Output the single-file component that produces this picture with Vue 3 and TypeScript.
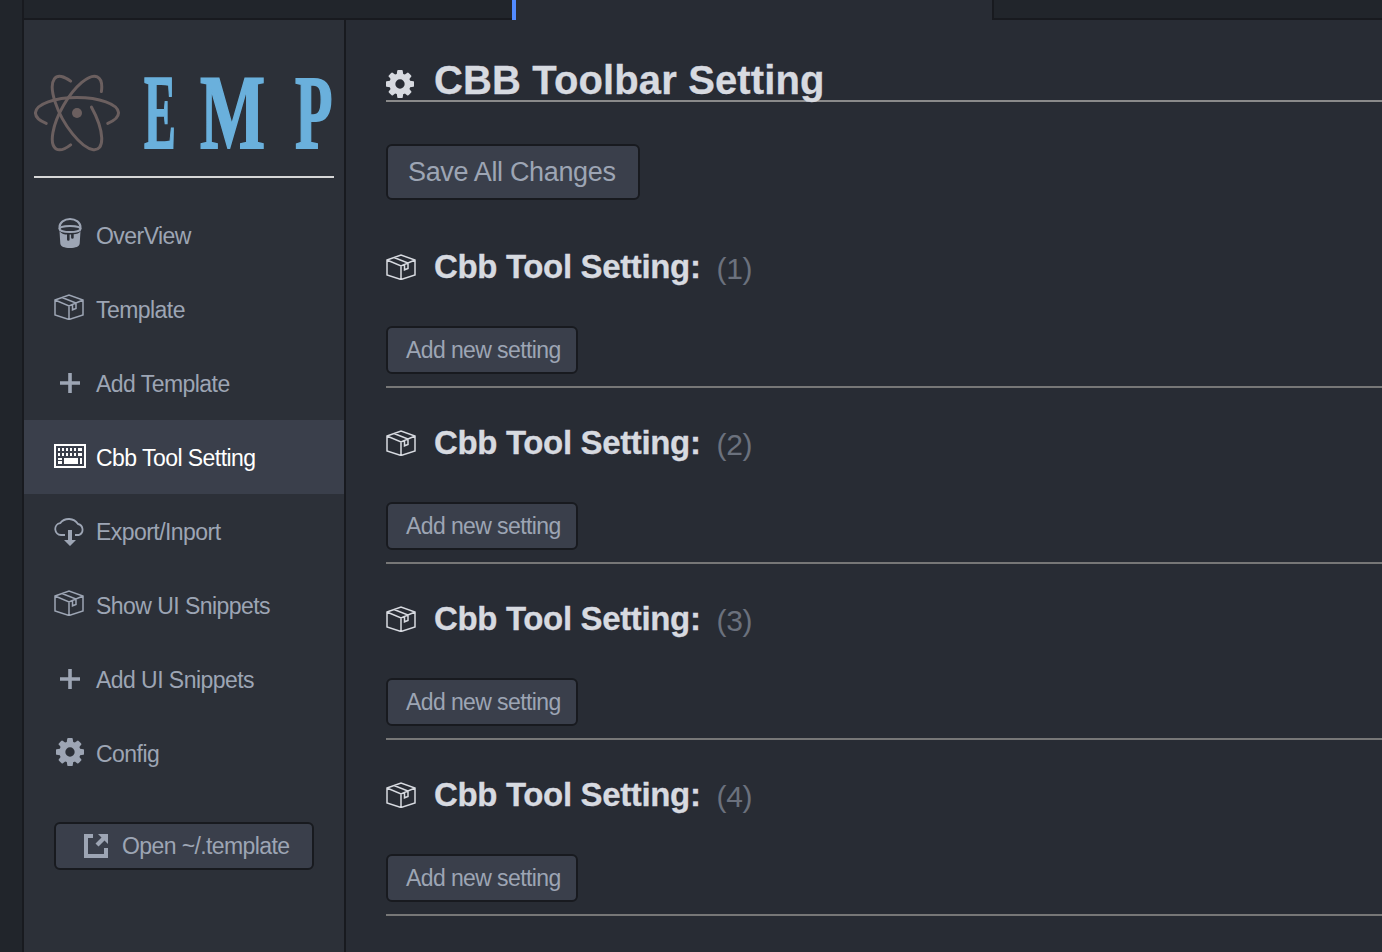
<script setup lang="ts">
interface NavItem {
  label: string
  icon: 'bucket' | 'box' | 'plus' | 'keyboard' | 'cloud' | 'gear'
  active?: boolean
}

const navItems: NavItem[] = [
  { label: 'OverView', icon: 'bucket' },
  { label: 'Template', icon: 'box' },
  { label: 'Add Template', icon: 'plus' },
  { label: 'Cbb Tool Setting', icon: 'keyboard', active: true },
  { label: 'Export/Inport', icon: 'cloud' },
  { label: 'Show UI Snippets', icon: 'box' },
  { label: 'Add UI Snippets', icon: 'plus' },
  { label: 'Config', icon: 'gear' }
]

const sections = [1, 2, 3, 4]

const gearPath =
  'M1024 768q0-106-75-181t-181-75-181 75-75 181 75 181 181 75 181-75 75-181zm512-109v222q0 12-8 23t-20 13l-185 28q-19 54-39 91 35 50 107 138 10 12 10 25t-9 23q-27 37-99 108t-94 71q-12 0-26-9l-138-108q-44 23-91 38-16 136-29 186-7 28-36 28h-222q-14 0-24.5-8.5t-11.5-21.5l-28-184q-49-16-90-37l-141 107q-10 9-25 9-14 0-25-11-126-114-165-168-7-10-7-23 0-12 8-23 15-21 51-66.5t54-70.5q-27-50-41-99l-183-27q-13-2-21-12.5t-8-23.5v-222q0-12 8-23t19-13l186-28q14-46 39-92-40-57-107-138-10-12-10-24 0-10 9-23 26-36 98.5-107.5t94.5-71.5q13 0 26 10l138 107q44-23 91-38 16-136 29-186 7-28 36-28h222q14 0 24.5 8.5t11.5 21.5l28 184q49 16 90 37l142-107q9-9 24-9 13 0 25 10 129 119 165 170 7 8 7 22 0 12-8 23-15 21-51 66.5t-54 70.5q26 50 41 98l183 28q13 2 21 12.5t8 23.5z'
const boxPath =
  'M1 6 15 1l14 5V21L15 25.500 1 21ZM1 6l14 6 14-6M15 12v13.500M8 3.500 22 9v5.500l-3.500 1.300v-5.300'
</script>

<template>
  <div class="app">
    <div class="strip"></div>
    <div class="window">
      <div class="tabs">
        <div class="tab"></div>
        <div class="tab-marker"></div>
        <div class="tab-current"></div>
        <div class="tab tab-rest"></div>
      </div>
      <div class="body">
        <aside class="sidebar">
          <div class="logo">
            <svg class="atom" width="88" height="80" viewBox="0 0 88 80" fill="none" stroke="#6b5f5f" stroke-width="3" stroke-linecap="round">
              <path d="M12.200 49.400A41.500 15.500 0 1 1 73.800 49.400" />
              <path d="M12.200 49.400A41.500 15.500 0 1 1 73.800 49.400" transform="rotate(-60 43 39)" />
              <path d="M40.800 54.500A41.500 15.500 0 1 1 73.800 49.400" transform="rotate(240 43 39)" />
              <circle cx="43" cy="39" r="5" fill="#6b5f5f" stroke="none" />
            </svg>
            <div class="wordmark">
              <span class="letter letter-e">E</span>
              <span class="letter letter-m">M</span>
              <span class="letter letter-p">P</span>
            </div>
          </div>
          <nav class="nav">
            <div v-for="item in navItems" :key="item.label" class="nav-item" :class="{ active: item.active }">
              <span class="nav-icon" :class="`icon-${item.icon}`">
                <svg v-if="item.icon === 'bucket'" width="24" height="30" viewBox="0 0 24 30">
                  <path d="M1.500 11V9a10.500 8 0 0 1 21 0v2" fill="none" stroke="currentColor" stroke-width="2" />
                  <ellipse cx="12" cy="11" rx="10.500" ry="3" fill="none" stroke="currentColor" stroke-width="2" />
                  <path d="M1.500 13c2 3 5.500 3.500 7.500 3.500v5a1.300 1.300 0 0 0 2.600 0v-5h1.500v3a1.300 1.300 0 0 0 2.600 0v-3.300c3 0 5.800-1 6.800-3.200l-.8 12.500c-.2 3-4 4.500-9.700 4.500s-9.500-1.500-9.700-4.500Z" fill="currentColor" />
                </svg>
                <svg v-else-if="item.icon === 'box'" width="30" height="26" viewBox="0 0 30 26" fill="none" stroke="currentColor" stroke-width="1.500">
                  <path :d="boxPath" />
                </svg>
                <svg v-else-if="item.icon === 'plus'" width="20" height="20" viewBox="0 0 20 20">
                  <path d="M8.200 0h3.600v8.200H20v3.600h-8.200V20H8.200v-8.200H0V8.200h8.200Z" fill="currentColor" />
                </svg>
                <svg v-else-if="item.icon === 'keyboard'" width="32" height="24" viewBox="0 0 32 24">
                  <path fill="currentColor" fill-rule="evenodd" d="M0 0h32v24H0ZM2 2v20h28V2Z" />
                  <path fill="currentColor" d="M4 4h2v3H4Zm4 0h2v3H8Zm4 0h2v3h-2Zm4 0h2v3h-2Zm4 0h2v3h-2Zm4 0h4v3h-4ZM4 9h2v3H4Zm4 0h2v3H8Zm4 0h2v3h-2Zm4 0h2v3h-2Zm4 0h2v3h-2Zm4 0h4v3h-4ZM4 14h4v2H4Zm0 3h4v3H4Zm6-3h14v6H10Zm16 0h2v6h-2Z" />
                </svg>
                <svg v-else-if="item.icon === 'cloud'" width="32" height="28" viewBox="0 0 32 28">
                  <path d="M11 17H7a6 6 0 0 1-.8-11.900A11 11 0 0 1 24 6a5.800 5.800 0 0 1 1 11h-4" fill="none" stroke="currentColor" stroke-width="1.800" />
                  <path d="M14 12h4v10h4l-6 6-6-6h4Z" fill="currentColor" />
                </svg>
                <svg v-else width="28" height="28" viewBox="0 0 1536 1536">
                  <path :d="gearPath" fill="currentColor" />
                </svg>
              </span>
              <span class="nav-label">{{ item.label }}</span>
            </div>
          </nav>
          <button class="btn btn-open">
            <svg width="24" height="24" viewBox="0 0 24 24">
              <path d="M0 0h9v4H4v16h16v-6h4v10H0Z" fill="currentColor" />
              <path d="M14 0h10v10l-3.500-3.500-6 6-3-3 6-6Z" fill="currentColor" />
            </svg>
            <span>Open ~/.template</span>
          </button>
        </aside>
        <main class="main">
          <h1 class="page-title">
            <svg width="28" height="28" viewBox="0 0 1536 1536">
              <path :d="gearPath" fill="currentColor" />
            </svg>
            <span>CBB Toolbar Setting</span>
          </h1>
          <button class="btn btn-save">Save All Changes</button>
          <div class="sections">
            <section v-for="n in sections" :key="n" class="section">
              <h2 class="section-title">
                <svg width="30" height="26" viewBox="0 0 30 26" fill="none" stroke="currentColor" stroke-width="1.500">
                  <path :d="boxPath" />
                </svg>
                <span class="section-name">Cbb Tool Setting:</span>
                <small>({{ n }})</small>
              </h2>
              <button class="btn btn-add">Add new setting</button>
            </section>
          </div>
        </main>
      </div>
    </div>
  </div>
</template>

<style scoped>
.app {
  display: flex;
  width: 1382px;
  height: 952px;
  overflow: hidden;
  font-family: "Liberation Sans", Arial, sans-serif;
  background: #282c34;
}

.strip {
  width: 22px;
  flex: none;
  background: #21252b;
  border-right: 2px solid #181a1f;
}

.window {
  flex: 1;
  min-width: 0;
  display: flex;
  flex-direction: column;
}

.tabs {
  display: flex;
  height: 20px;
  flex: none;
}

.tab {
  width: 488px;
  background: #21252b;
  border-bottom: 2px solid #181a1f;
}

.tab-marker {
  width: 4px;
  height: 20px;
  background: #528bff;
}

.tab-current {
  width: 476px;
  background: #282c34;
}

.tab-rest {
  flex: 1;
  border-left: 2px solid #181a1f;
}

.body {
  flex: 1;
  display: flex;
  min-height: 0;
}

.sidebar {
  width: 320px;
  flex: none;
  background: #2c3038;
  border-right: 2px solid #181a1f;
}

.logo {
  display: flex;
  align-items: center;
  height: 158px;
  margin: 0 10px;
  padding-top: 32px;
  box-sizing: border-box;
  border-bottom: 2px solid #d7d7d7;
}

.atom {
  flex: none;
}

.wordmark {
  display: flex;
  color: #6ab0dc;
  font-family: "Liberation Serif", serif;
  font-weight: 700;
  font-size: 106px;
  line-height: 72px;
  height: 72px;
  margin: -2px 0 0 22px;
  -webkit-text-stroke: 2px #6ab0dc;
}

.letter {
  display: block;
  transform-origin: left center;
}

.letter-e {
  width: 56px;
  transform: scaleX(0.45);
}

.letter-m {
  width: 95px;
  transform: scaleX(0.65);
}

.letter-p {
  width: 36px;
  transform: scaleX(0.58);
}

.nav {
  margin-top: 20px;
}

.nav-item {
  display: flex;
  align-items: center;
  height: 74px;
  padding-left: 30px;
  color: #9da5b4;
  font-size: 23px;
  letter-spacing: -0.55px;
}

.nav-item.active {
  background: #3a3f4b;
  color: #fff;
}

.nav-label {
  padding-top: 2px;
}

.nav-icon {
  display: flex;
  justify-content: center;
  align-items: center;
  width: 32px;
  margin-right: 10px;
}

.icon-bucket {
  margin-top: -4px;
}

.icon-box {
  margin-top: -4px;
}

.icon-box svg {
  margin-left: -2px;
}

.icon-keyboard,
.icon-gear {
  margin-top: -2px;
}

.icon-cloud {
  margin-top: 2px;
}

.btn {
  display: flex;
  align-items: center;
  box-sizing: border-box;
  font-family: inherit;
  background: #3a3f4b;
  border: 2px solid #181a1f;
  border-radius: 6px;
  color: #9da5b4;
  padding: 0;
}

.btn-open {
  width: 260px;
  height: 48px;
  margin: 32px 0 0 30px;
  padding-left: 28px;
  gap: 14px;
  font-size: 23px;
  letter-spacing: -0.6px;
}

.main {
  flex: 1;
  min-width: 0;
  padding-left: 40px;
}

.page-title {
  display: flex;
  align-items: center;
  height: 62px;
  margin: 20px 0 42px;
  box-sizing: border-box;
  border-bottom: 2px solid #8a8a8a;
  color: #d7dae0;
  font-size: 40px;
  line-height: 40px;
  font-weight: 700;
  letter-spacing: 0.13px;
  -webkit-text-stroke: 0.3px #d7dae0;
}

.page-title svg {
  flex: none;
  margin: 28px 20px 0 0;
}

.page-title span {
  margin-top: 20px;
}

.btn-save {
  width: 254px;
  height: 56px;
  padding-left: 20px;
  font-size: 27px;
  letter-spacing: -0.35px;
}

.sections {
  margin-top: 12px;
}

.section {
  height: 176px;
  border-bottom: 2px solid #777;
  box-sizing: border-box;
}

.section-title {
  display: flex;
  align-items: center;
  height: 34px;
  margin: 0 0 41px;
  padding-top: 39px;
  box-sizing: content-box;
  color: #d7dae0;
  font-size: 33px;
  font-weight: 700;
  letter-spacing: -0.35px;
  -webkit-text-stroke: 0.3px #d7dae0;
}

.section-title svg {
  flex: none;
  margin: -2px 18px 0 0;
}

.section-name {
  margin-top: -2px;
}

.section-title small {
  margin-left: 16px;
  color: #6b717d;
  font-size: 30px;
  font-weight: 400;
  padding-top: 2px;
  -webkit-text-stroke: 0;
}

.btn-add {
  width: 192px;
  height: 48px;
  padding-left: 18px;
  font-size: 23px;
  letter-spacing: -0.6px;
}
</style>

<style>
html,
body {
  margin: 0;
  background: #282c34;
}
</style>
